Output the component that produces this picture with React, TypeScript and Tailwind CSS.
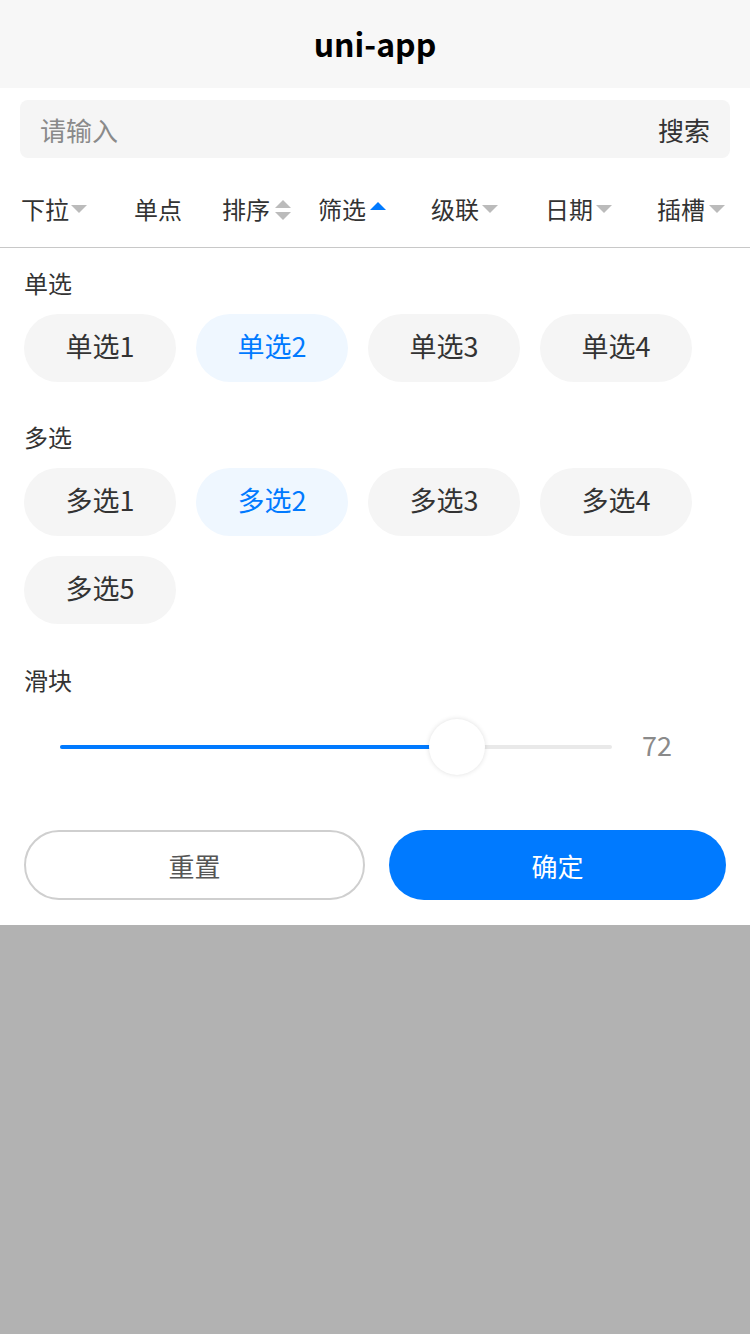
import React from "react";

const font = { fontFamily: '"Noto Sans CJK SC", "Noto Sans", sans-serif' };

function Down({ color = "#bbbbbb" }: { color?: string }) {
  return (
    <svg width="16" height="8" viewBox="0 0 16 8" className="block">
      <path d="M0 0 L16 0 L8 8 Z" fill={color} />
    </svg>
  );
}
function Up({ color = "#bbbbbb" }: { color?: string }) {
  return (
    <svg width="16" height="8" viewBox="0 0 16 8" className="block">
      <path d="M8 0 L16 8 L0 8 Z" fill={color} />
    </svg>
  );
}

function Chip({ label, active }: { label: string; active?: boolean }) {
  return (
    <div
      className={
        active
          ? "w-[152px] h-[68px] rounded-full bg-[#eff7ff] text-[#007aff] text-[27px] flex items-center justify-center pb-[3px]"
          : "w-[152px] h-[68px] rounded-full bg-[#f5f5f5] text-[#333333] text-[27px] flex items-center justify-center pb-[3px]"
      }
    >
      {label}
    </div>
  );
}

export default function App() {
  return (
    <div className="w-[750px] h-[1334px] bg-[#b2b2b2] flex flex-col" style={font}>
      <div className="h-[88px] bg-[#f7f7f7] flex items-center justify-center">
        <span className="text-[32px] font-bold text-black leading-none pb-[2px]">uni-app</span>
      </div>
      <div className="bg-white">
        <div className="px-[20px] pt-[12px]">
          <div className="h-[58px] rounded-[8px] bg-[#f5f5f5] flex items-center justify-between px-[20px]">
            <span className="text-[26px] text-[#8a8a8a]">请输入</span>
            <span className="text-[26px] text-[#333333]">搜索</span>
          </div>
        </div>
        <div className="h-[90px] flex items-center pl-[21px] border-b border-[#c8c8c8] text-[24px] text-[#333333] pt-[13px]">
          <div className="w-[113px] flex items-center">
            <span>下拉</span>
            <span className="ml-[2px] mt-[-1px]"><Down /></span>
          </div>
          <div className="w-[88px] flex items-center">
            <span>单点</span>
          </div>
          <div className="w-[96px] flex items-center">
            <span>排序</span>
            <span className="ml-[5px] flex flex-col gap-[4px] mt-[2px]">
              <Up />
              <Down />
            </span>
          </div>
          <div className="w-[113px] flex items-center">
            <span>筛选</span>
            <span className="ml-[4px] mt-[-6px]"><Up color="#007aff" /></span>
          </div>
          <div className="w-[114px] flex items-center">
            <span>级联</span>
            <span className="ml-[3px] mt-[-1px]"><Down /></span>
          </div>
          <div className="w-[112px] flex items-center">
            <span>日期</span>
            <span className="ml-[3px] mt-[-1px]"><Down /></span>
          </div>
          <div className="flex items-center">
            <span>插槽</span>
            <span className="ml-[4px] mt-[-1px]"><Down /></span>
          </div>
        </div>
        <div className="px-[24px] pt-[19px] pb-[25px] text-[#333333]">
          <div className="text-[24px] leading-[32px]">单选</div>
          <div className="mt-[15px] flex flex-wrap gap-[20px]">
            <Chip label="单选1" />
            <Chip label="单选2" active />
            <Chip label="单选3" />
            <Chip label="单选4" />
          </div>
          <div className="mt-[39px] text-[24px] leading-[32px]">多选</div>
          <div className="mt-[15px] flex flex-wrap gap-[20px]">
            <Chip label="多选1" />
            <Chip label="多选2" active />
            <Chip label="多选3" />
            <Chip label="多选4" />
            <Chip label="多选5" />
          </div>
          <div className="mt-[40px] text-[24px] leading-[32px]">滑块</div>
          <div className="mt-[23px] h-[56px] flex items-center">
            <div className="ml-[36px] w-[552px] h-[4px] bg-[#e9e9e9] rounded-full relative">
              <div className="h-full bg-[#007aff] rounded-full" style={{ width: "72%" }} />
              <div
                className="absolute top-1/2 w-[56px] h-[56px] -translate-x-1/2 -translate-y-1/2 rounded-full bg-white shadow-[0_0_5px_rgba(0,0,0,0.13)]"
                style={{ left: "72%" }}
              />
            </div>
            <span className="ml-[30px] text-[27px] text-[#8a8a8a] pb-[3px]">72</span>
          </div>
          <div className="mt-[55px] flex gap-[24px]">
            <div className="flex-1 h-[70px] rounded-full border-[2px] border-[#cfcfcf] bg-white flex items-center justify-center text-[26px] text-[#555555]">
              重置
            </div>
            <div className="flex-1 h-[70px] rounded-full bg-[#007aff] flex items-center justify-center text-[26px] text-white">
              确定
            </div>
          </div>
        </div>
      </div>
    </div>
  );
}
